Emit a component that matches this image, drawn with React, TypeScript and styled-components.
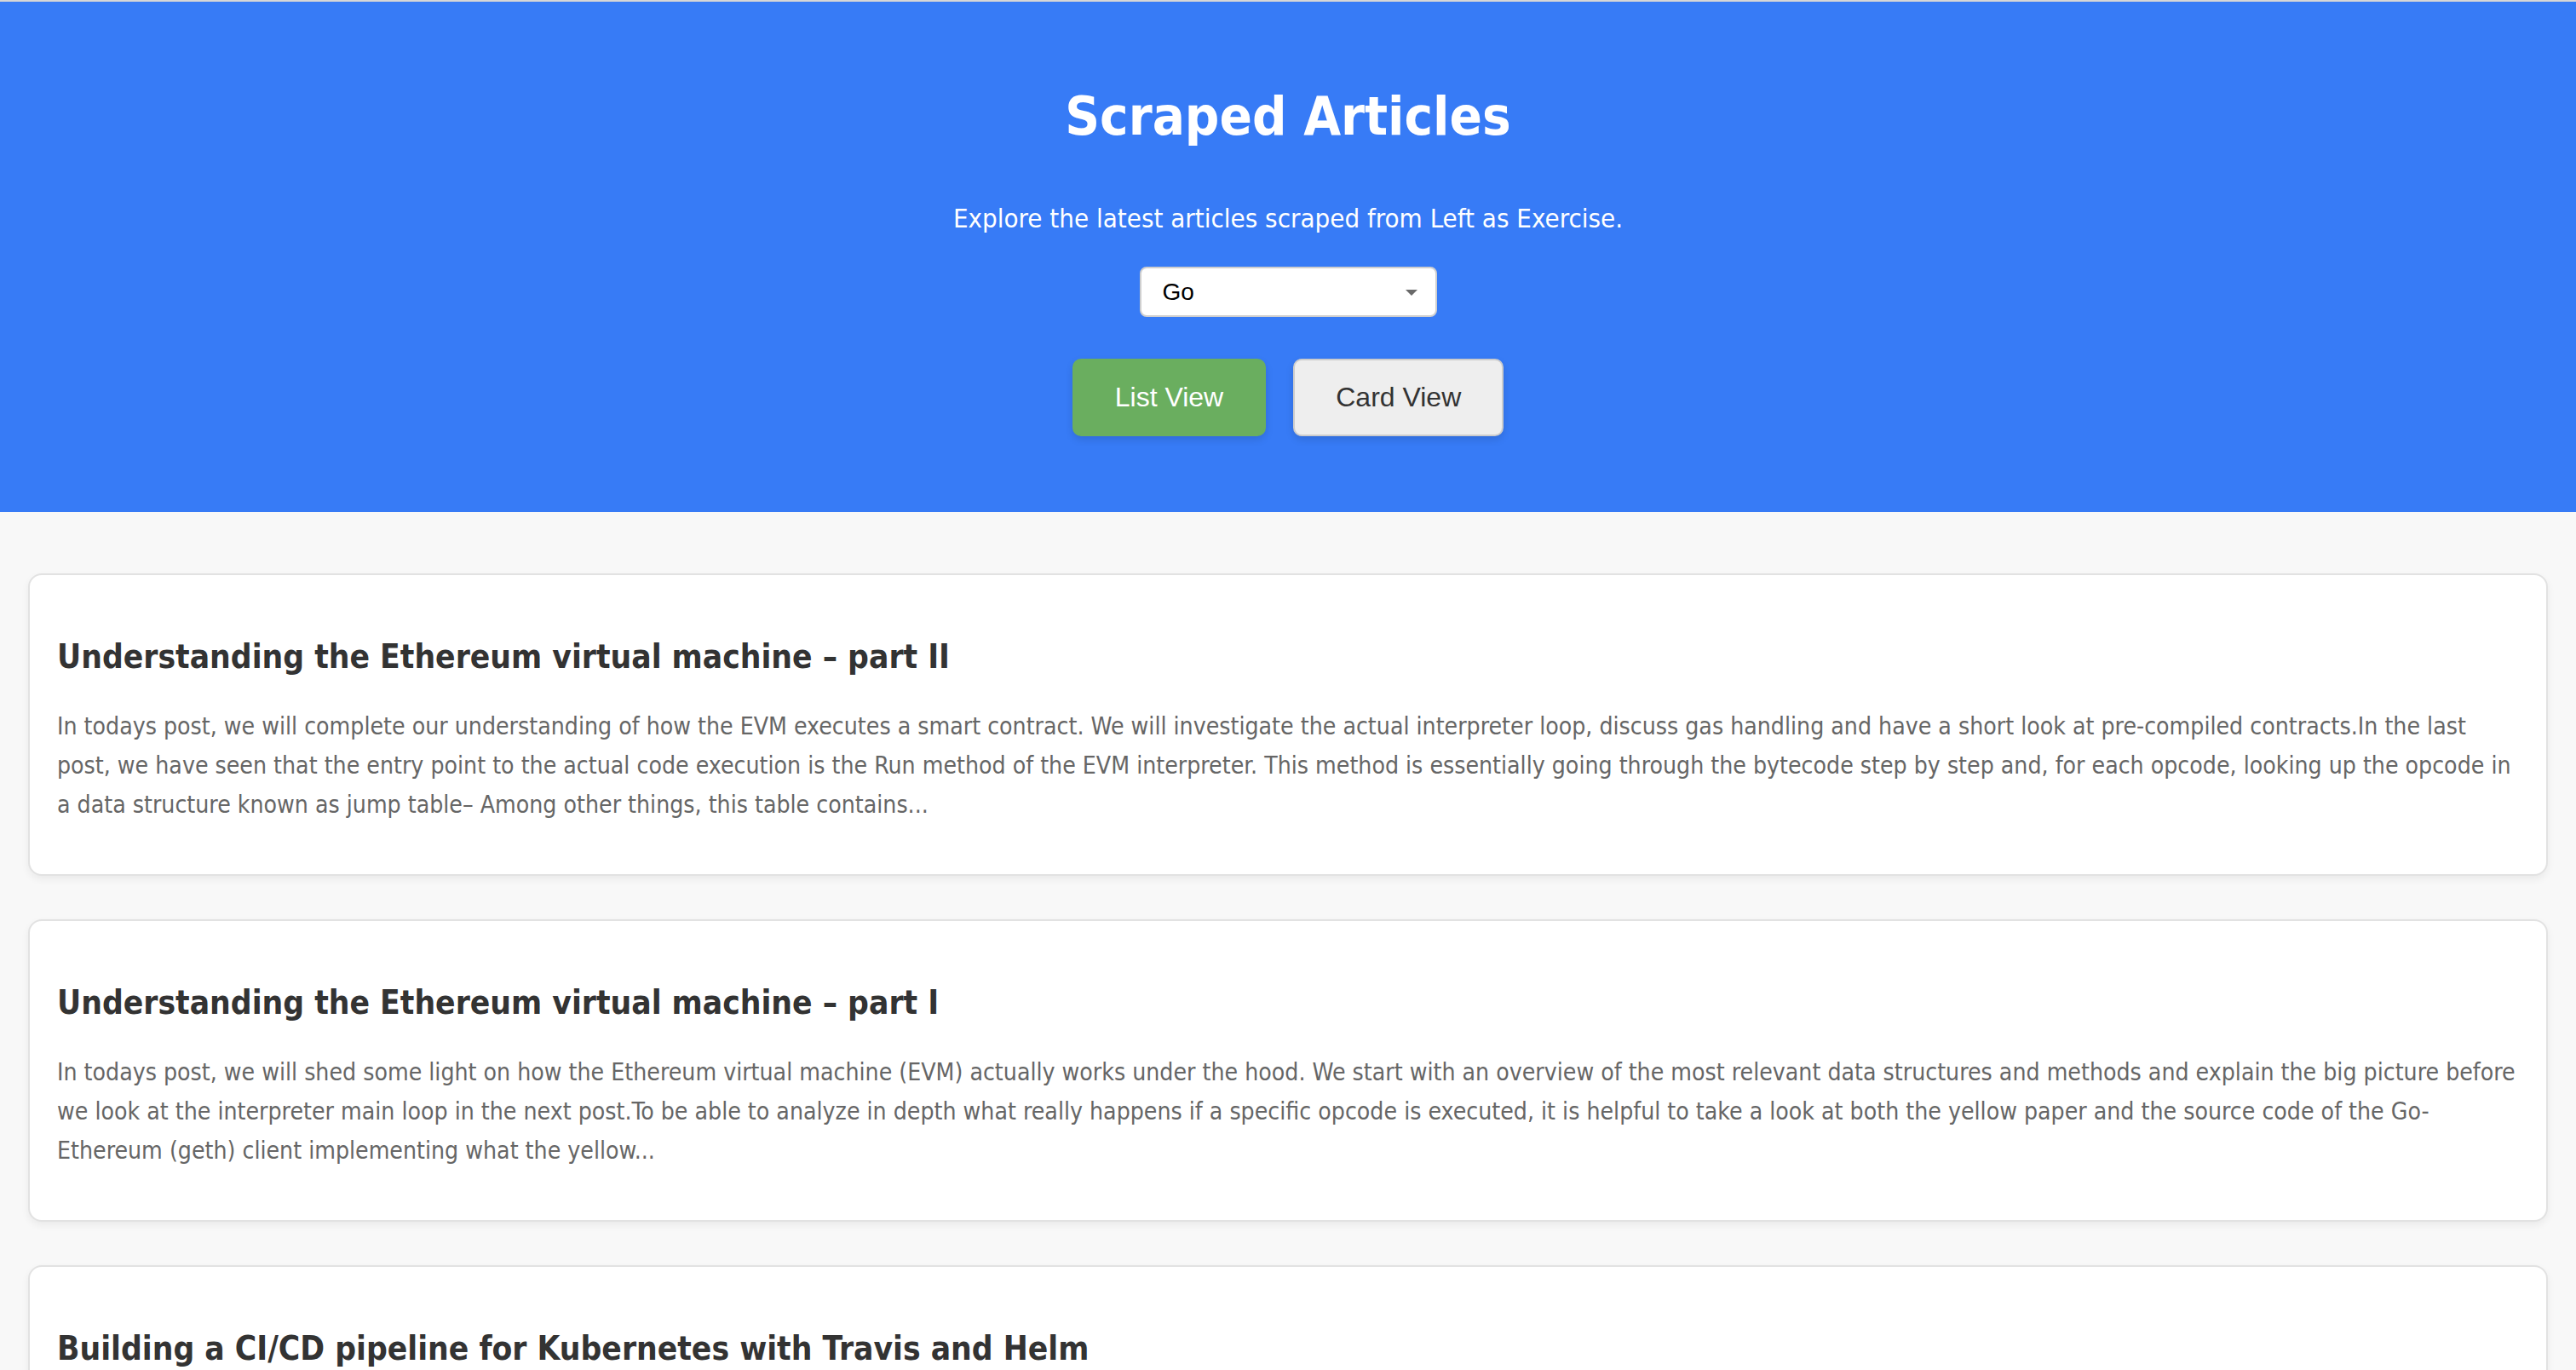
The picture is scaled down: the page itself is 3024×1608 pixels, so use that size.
import React, { useState } from "react";
import styled, { createGlobalStyle } from "styled-components";

const GlobalStyle = createGlobalStyle`
  html, body {
    margin: 0;
    padding: 0;
  }
  body {
    background: #f8f8f8;
    border-top: 2px solid #d6d6d6;
    font-family: "DejaVu Sans Condensed", "DejaVu Sans", sans-serif;
    font-stretch: condensed;
  }
`;

const Page = styled.div`
  min-height: 100vh;
`;

const Header = styled.header`
  background: #377bf6;
  color: #ffffff;
  display: flex;
  flex-direction: column;
  align-items: center;
  padding: 95px 0 89px;
`;

const Title = styled.h1`
  margin: 0;
  font-family: "DejaVu Sans Condensed", "DejaVu Sans", sans-serif;
  font-stretch: condensed;
  font-weight: 700;
  font-size: 63px;
  line-height: 80px;
`;

const Subtitle = styled.p`
  margin: 59px 0 0;
  font-family: "DejaVu Sans Condensed", "DejaVu Sans", sans-serif;
  font-stretch: condensed;
  font-size: 31px;
  line-height: 40px;
`;

const SelectWrap = styled.div`
  position: relative;
  margin-top: 37px;
  width: 349px;
  height: 59px;
`;

const Select = styled.select`
  appearance: none;
  -webkit-appearance: none;
  box-sizing: border-box;
  width: 100%;
  height: 100%;
  padding: 0 25px;
  border: 2px solid #cfcfcf;
  border-radius: 8px;
  background: #ffffff;
  color: #000000;
  font-family: "Liberation Sans", Arial, sans-serif;
  font-size: 28px;
  outline: none;
`;

const Arrow = styled.span`
  position: absolute;
  right: 23px;
  top: 27px;
  width: 0;
  height: 0;
  border-left: 7px solid transparent;
  border-right: 7px solid transparent;
  border-top: 7px solid #6a6a6a;
  pointer-events: none;
`;

const ButtonRow = styled.div`
  display: flex;
  gap: 32px;
  margin-top: 49px;
`;

const ViewButton = styled.button<{ $active?: boolean }>`
  box-sizing: border-box;
  height: 91px;
  padding: 0 48px;
  border-radius: 10px;
  border: 2px solid ${(p) => (p.$active ? "#6aae5f" : "#cccccc")};
  background: ${(p) => (p.$active ? "#6aae5f" : "#eeeeee")};
  color: ${(p) => (p.$active ? "#ffffff" : "#333333")};
  font-family: "Liberation Sans", Arial, sans-serif;
  font-size: 32px;
  box-shadow: 0 4px 10px rgba(0, 0, 0, 0.12);
  cursor: pointer;
`;

const List = styled.main`
  display: flex;
  flex-direction: column;
  gap: 51px;
  padding: 72px 33px 60px;
`;

const Card = styled.article`
  background: #ffffff;
  border: 2px solid #e2e2e2;
  border-radius: 16px;
  box-shadow: 0 4px 10px rgba(0, 0, 0, 0.06);
  padding: 71px 32px 58px;
`;

const CardTitle = styled.h2`
  margin: 0;
  color: #333333;
  font-family: "DejaVu Sans Condensed", "DejaVu Sans", sans-serif;
  font-stretch: condensed;
  font-weight: 700;
  font-size: 38.6px;
  line-height: 50px;
`;

const CardText = styled.p`
  margin: 34px 0 0;
  color: #666666;
  font-family: "DejaVu Sans Condensed", "DejaVu Sans", sans-serif;
  font-stretch: condensed;
  font-size: 28.2px;
  line-height: 46px;
`;

const articles = [
  {
    title: "Understanding the Ethereum virtual machine \u2013 part II",
    text: "In todays post, we will complete our understanding of how the EVM executes a smart contract. We will investigate the actual interpreter loop, discuss gas handling and have a short look at pre-compiled contracts.In the last post, we have seen that the entry point to the actual code execution is the Run method of the EVM interpreter. This method is essentially going through the bytecode step by step and, for each opcode, looking up the opcode in a data structure known as jump table\u2013 Among other things, this table contains...",
  },
  {
    title: "Understanding the Ethereum virtual machine \u2013 part I",
    text: "In todays post, we will shed some light on how the Ethereum virtual machine (EVM) actually works under the hood. We start with an overview of the most relevant data structures and methods and explain the big picture before we look at the interpreter main loop in the next post.To be able to analyze in depth what really happens if a specific opcode is executed, it is helpful to take a look at both the yellow paper and the source code of the Go-Ethereum (geth) client implementing what the yellow...",
  },
  {
    title: "Building a CI/CD pipeline for Kubernetes with Travis and Helm",
    text: "One of the strengths of Kubernetes is the ability to spin up pods and containers with a defined workload within seconds, which makes it the ideal platform for automated testing and continuous deployment. In this post, we will see how GitHub, Travis CI and Helm can be combined to realize a simple CI/CD pipeline for Kubernetes...",
  },
];

export default function App() {
  const [view, setView] = useState<"list" | "card">("list");
  const [lang, setLang] = useState("Go");
  return (
    <Page>
      <GlobalStyle />
      <Header>
        <Title>Scraped Articles</Title>
        <Subtitle>Explore the latest articles scraped from Left as Exercise.</Subtitle>
        <SelectWrap>
          <Select value={lang} onChange={(e) => setLang(e.target.value)}>
            <option>Go</option>
            <option>Python</option>
            <option>Kubernetes</option>
          </Select>
          <Arrow />
        </SelectWrap>
        <ButtonRow>
          <ViewButton $active={view === "list"} onClick={() => setView("list")}>
            List View
          </ViewButton>
          <ViewButton $active={view === "card"} onClick={() => setView("card")}>
            Card View
          </ViewButton>
        </ButtonRow>
      </Header>
      <List>
        {articles.map((a) => (
          <Card key={a.title}>
            <CardTitle>{a.title}</CardTitle>
            <CardText>{a.text}</CardText>
          </Card>
        ))}
      </List>
    </Page>
  );
}
